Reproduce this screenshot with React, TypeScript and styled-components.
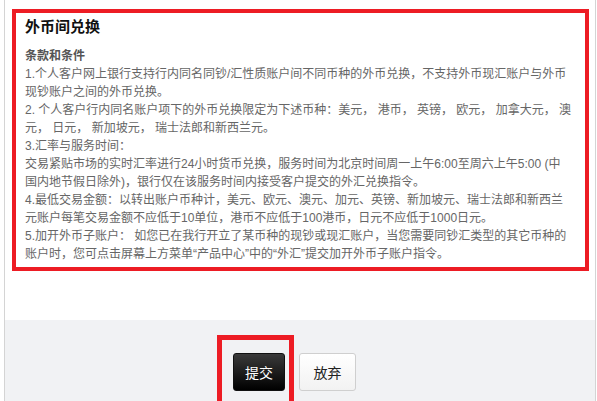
import React from 'react';
import styled, { createGlobalStyle } from 'styled-components';

const GlobalStyle = createGlobalStyle`
  html, body {
    margin: 0;
    padding: 0;
    height: 100%;
    overflow: hidden;
    background: #fff;
  }
  body {
    font-family: "Liberation Sans", "Noto Sans CJK SC", sans-serif;
  }
  #root {
    height: 100%;
  }
`;

const Frame = styled.div`
  display: flex;
  flex-direction: column;
  box-sizing: border-box;
  width: 592px;
  height: 100%;
  margin-left: 4px;
  border-left: 1px solid #d4d4d4;
  border-right: 1px solid #d4d4d4;
`;

const Content = styled.div`
  flex: none;
  box-sizing: border-box;
  height: 320px;
  padding: 9px 6px 0 7px;
  background: #fff;
`;

const Panel = styled.section`
  box-sizing: border-box;
  height: 262px;
  border: 4px solid #ed1c24;
  padding: 4px 10px 0 9px;
`;

const Title = styled.h2`
  margin: 0 0 10px;
  font-size: 15px;
  line-height: 20px;
  font-weight: bold;
  color: #111;
`;

const Terms = styled.div`
  font-size: 12px;
  line-height: 18px;
  color: #666;
  white-space: nowrap;
`;

const TermsHead = styled.div`
  font-weight: bold;
  color: #555;
`;

const Clause = styled.p`
  margin: 0;
`;

const Footer = styled.div`
  flex: 1 0 auto;
  background: #f1f2f4;
  padding: 15px 0 0 212px;
`;

const Actions = styled.div`
  display: flex;
  align-items: flex-start;
  gap: 5px;
`;

const Highlight = styled.div`
  border: 5px solid #ed1c24;
  padding: 13px 4px 20px 11px;
`;

const Button = styled.button<{ $primary?: boolean }>`
  height: 38px;
  padding: 0;
  border-radius: 3px;
  font-family: "Liberation Sans", "Noto Sans CJK SC", sans-serif;
  font-size: 14px;
  cursor: pointer;
  width: ${(p) => (p.$primary ? '52px' : '57px')};
  margin-top: ${(p) => (p.$primary ? '0' : '18px')};
  color: ${(p) => (p.$primary ? '#fff' : '#222')};
  border: 1px solid ${(p) => (p.$primary ? '#111' : '#cfcfcf')};
  background: ${(p) =>
    p.$primary
      ? 'linear-gradient(to bottom, #3a3a3a, #000)'
      : 'linear-gradient(to bottom, #fff, #f2f2f2)'};
`;

export default function App() {
  return (
    <>
      <GlobalStyle />
      <Frame>
        <Content>
          <Panel>
            <Title>外币间兑换</Title>
            <Terms>
              <TermsHead>条款和条件</TermsHead>
              <Clause>
                1.个人客户网上银行支持行内同名同钞/汇性质账户间不同币种的外币兑换，不支持外币现汇账户与外币
                <br />
                现钞账户之间的外币兑换。
              </Clause>
              <Clause>
                2. 个人客户行内同名账户项下的外币兑换限定为下述币种：美元， 港币， 英镑， 欧元， 加拿大元， 澳
                <br />
                元， 日元， 新加坡元， 瑞士法郎和新西兰元。
              </Clause>
              <Clause>
                3.汇率与服务时间：
                <br />
                交易紧贴市场的实时汇率进行24小时货币兑换，服务时间为北京时间周一上午6:00至周六上午5:00 (中
                <br />
                国内地节假日除外)，银行仅在该服务时间内接受客户提交的外汇兑换指令。
              </Clause>
              <Clause>
                4.最低交易金额：以转出账户币种计，美元、欧元、澳元、加元、英镑、新加坡元、瑞士法郎和新西兰
                <br />
                元账户每笔交易金额不应低于10单位，港币不应低于100港币，日元不应低于1000日元。
              </Clause>
              <Clause>
                5.加开外币子账户： 如您已在我行开立了某币种的现钞或现汇账户，当您需要同钞汇类型的其它币种的
                <br />
                账户时，您可点击屏幕上方菜单“产品中心”中的“外汇”提交加开外币子账户指令。
              </Clause>
            </Terms>
          </Panel>
        </Content>
        <Footer>
          <Actions>
            <Highlight>
              <Button $primary>提交</Button>
            </Highlight>
            <Button>放弃</Button>
          </Actions>
        </Footer>
      </Frame>
    </>
  );
}
